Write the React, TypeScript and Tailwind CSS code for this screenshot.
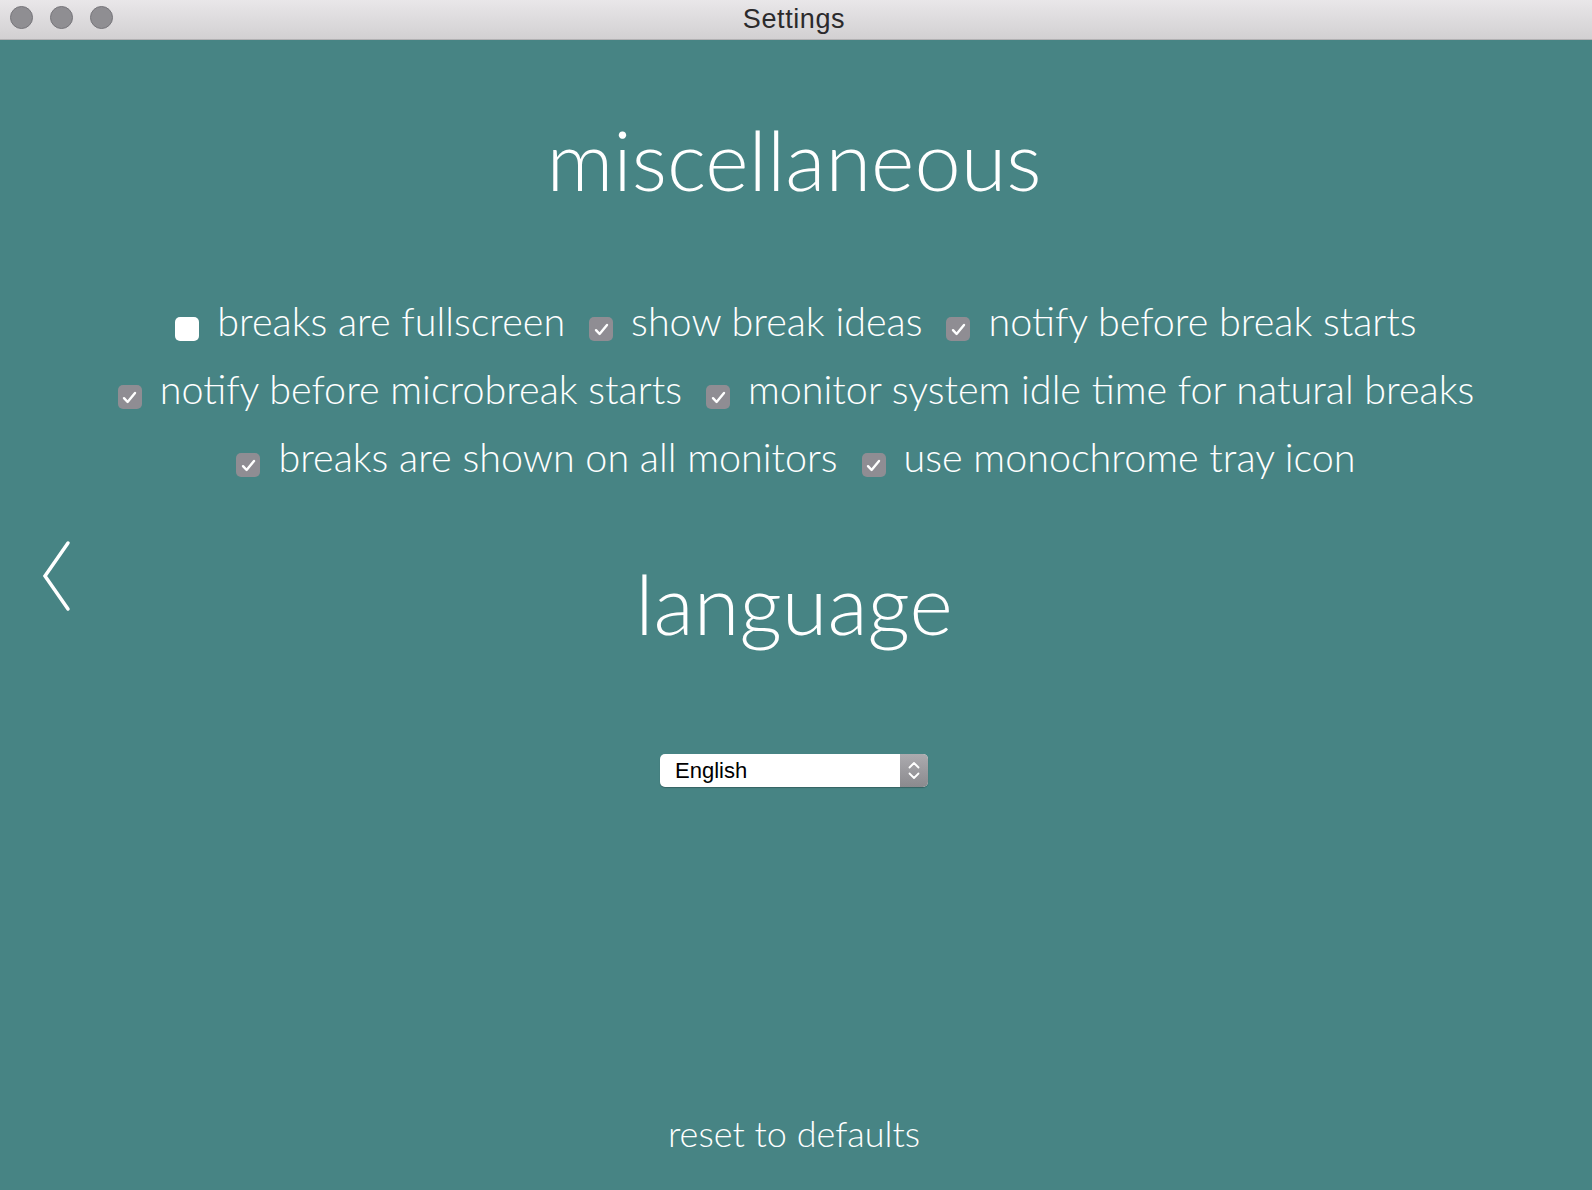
import React from "react";

const lato = { fontFamily: "Lato, 'Open Sans', sans-serif" };

function Box({ checked }: { checked: boolean }) {
  if (!checked) {
    return <span className="mt-[16px] inline-block h-[24px] w-[24px] shrink-0 rounded-[5px] bg-white" />;
  }
  return (
    <span className="mt-[16px] inline-flex h-[24px] w-[24px] shrink-0 items-center justify-center rounded-[5px] bg-[#8f8d93]">
      <svg width="15" height="13" viewBox="0 0 15 13" fill="none">
        <path d="M2 7.2 L5.6 11 L13 2" stroke="white" strokeWidth="2.4" strokeLinecap="round" strokeLinejoin="round" />
      </svg>
    </span>
  );
}

function Item({ label, checked }: { label: string; checked: boolean }) {
  return (
    <span className="flex items-center gap-[18px]">
      <Box checked={checked} />
      <span>{label}</span>
    </span>
  );
}

export default function App() {
  return (
    <div className="relative flex h-[1190px] w-[1592px] flex-col overflow-hidden bg-[#478484]">
      <div className="relative flex h-[40px] shrink-0 items-center justify-center border-b border-[#b2b1b3] bg-gradient-to-b from-[#e9e7e9] to-[#d2d0d2]">
        <div className="absolute left-[10px] top-[6px] flex gap-[17px]">
          <span className="h-[23px] w-[23px] rounded-full border border-[#76757a] bg-[#8f8e92]" />
          <span className="h-[23px] w-[23px] rounded-full border border-[#76757a] bg-[#8f8e92]" />
          <span className="h-[23px] w-[23px] rounded-full border border-[#76757a] bg-[#8f8e92]" />
        </div>
        <span className="mr-[4px] text-[27px] tracking-[0.6px] text-[#2b2a2c]" style={{ fontFamily: "'Liberation Sans', Arial, sans-serif" }}>Settings</span>
      </div>

      <div className="flex flex-1 flex-col items-center text-white font-light" style={lato}>
        <h1 className="mr-[4px] mt-[78px] text-[83px] font-light leading-none">miscellaneous</h1>

        <div className="mt-[86px] flex flex-col items-center text-[39.5px] leading-[68px]">
          <div className="flex gap-[24px]">
            <Item label="breaks are fullscreen" checked={false} />
            <Item label="show break ideas" checked />
            <Item label="notify before break starts" checked />
          </div>
          <div className="flex gap-[24px]">
            <Item label="notify before microbreak starts" checked />
            <Item label="monitor system idle time for natural breaks" checked />
          </div>
          <div className="flex gap-[24px]">
            <Item label="breaks are shown on all monitors" checked />
            <Item label="use monochrome tray icon" checked />
          </div>
        </div>

        <h1 className="mr-[4px] mt-[71px] text-[83px] font-light leading-none">language</h1>

        <div className="mr-[4px] mt-[109px] flex h-[33px] w-[268px] overflow-hidden rounded-[5px] bg-white shadow-[0_1px_1px_rgba(0,0,0,0.25)]">
          <span className="flex flex-1 items-center pl-[15px] text-[22px] text-black" style={{ fontFamily: "'Liberation Sans', Arial, sans-serif" }}>English</span>
          <span className="flex w-[28px] flex-col items-center justify-center gap-[3px] bg-gradient-to-b from-[#acabaf] to-[#8b8a8e]">
            <svg width="12" height="8" viewBox="0 0 12 8" fill="none"><path d="M1.5 6.5 L6 2 L10.5 6.5" stroke="white" strokeWidth="1.8" strokeLinecap="round" strokeLinejoin="round" /></svg>
            <svg width="12" height="8" viewBox="0 0 12 8" fill="none"><path d="M1.5 1.5 L6 6 L10.5 1.5" stroke="white" strokeWidth="1.8" strokeLinecap="round" strokeLinejoin="round" /></svg>
          </span>
        </div>

        <div className="mr-[4px] mt-auto pb-[39px] text-[36px] font-light leading-none">reset to defaults</div>
      </div>

      <svg className="absolute left-[41px] top-[539px]" width="32" height="74" viewBox="0 0 32 74" fill="none">
        <path d="M27 4 L4 37 L27 70" stroke="white" strokeWidth="3.5" strokeLinecap="round" strokeLinejoin="miter" />
      </svg>
    </div>
  );
}
